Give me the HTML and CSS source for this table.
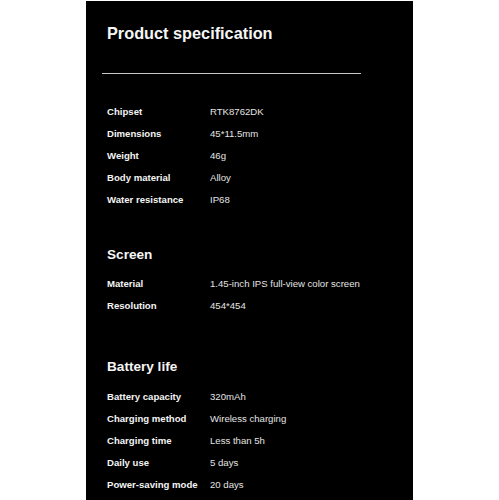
FILE: index.html
```html
<!DOCTYPE html>
<html lang="en">
<head>
  <meta charset="UTF-8" />
  <title>Product specification</title>
  <link rel="stylesheet" href="styles.css">
</head>
<body>
  <div class="spec-panel">
    <h1 class="spec-title">Product specification</h1>
    <hr class="spec-divider" />

    <div class="spec-list">
      <div class="spec-row"><span class="spec-label">Chipset</span><span class="spec-value">RTK8762DK</span></div>
      <div class="spec-row"><span class="spec-label">Dimensions</span><span class="spec-value">45*11.5mm</span></div>
      <div class="spec-row"><span class="spec-label">Weight</span><span class="spec-value">46g</span></div>
      <div class="spec-row"><span class="spec-label">Body material</span><span class="spec-value">Alloy</span></div>
      <div class="spec-row"><span class="spec-label">Water resistance</span><span class="spec-value">IP68</span></div>
    </div>

    <section class="spec-section">
      <h2 class="section-title">Screen</h2>
      <div class="spec-list">
        <div class="spec-row"><span class="spec-label">Material</span><span class="spec-value">1.45-inch IPS full-view color screen</span></div>
        <div class="spec-row"><span class="spec-label">Resolution</span><span class="spec-value">454*454</span></div>
      </div>
    </section>

    <section class="spec-section battery">
      <h2 class="section-title">Battery life</h2>
      <div class="spec-list">
        <div class="spec-row"><span class="spec-label">Battery capacity</span><span class="spec-value">320mAh</span></div>
        <div class="spec-row"><span class="spec-label">Charging method</span><span class="spec-value">Wireless charging</span></div>
        <div class="spec-row"><span class="spec-label">Charging time</span><span class="spec-value">Less than 5h</span></div>
        <div class="spec-row"><span class="spec-label">Daily use</span><span class="spec-value">5 days</span></div>
        <div class="spec-row"><span class="spec-label">Power-saving mode</span><span class="spec-value">20 days</span></div>
      </div>
    </section>
  </div>
</body>
</html>
```

FILE: styles.css
```css
* {
  box-sizing: border-box;
  margin: 0;
  padding: 0;
  font-family: 'Liberation Sans', Arial, sans-serif;
}

body {
  background-color: #ffffff;
  height: 500px;
  overflow: hidden;
}

/* Black spec panel */
.spec-panel {
  background-color: #000000;
  color: #f2f2f2;
  width: 327px;
  min-height: 499px;
  margin: 1px 0 0 86px;
  padding: 22px 0 0 21px;
}

.spec-title {
  font-size: 16.3px;
  line-height: 20px;
  font-weight: 700;
  color: #f6f6f6;
}

.spec-divider {
  border: none;
  height: 1px;
  background-color: #c8c8c8;
  width: 259px;
  margin: 30px 0 0 -5px;
}

.spec-list {
  margin-top: 27px;
}

.spec-row {
  display: grid;
  grid-template-columns: 103px 1fr;
  font-size: 9.6px;
  line-height: 22px;
}

.spec-label {
  font-weight: 700;
  color: #f4f4f4;
}

.spec-value {
  color: #e4e4e4;
}

/* Sub sections */
.spec-section {
  margin-top: 35px;
}

.spec-section.battery {
  margin-top: 41px;
}

.section-title {
  font-size: 13.6px;
  line-height: 18px;
  font-weight: 700;
  color: #f6f6f6;
}

.spec-section .spec-list {
  margin-top: 9px;
}

.spec-section.battery .spec-list {
  margin-top: 10px;
}
```
